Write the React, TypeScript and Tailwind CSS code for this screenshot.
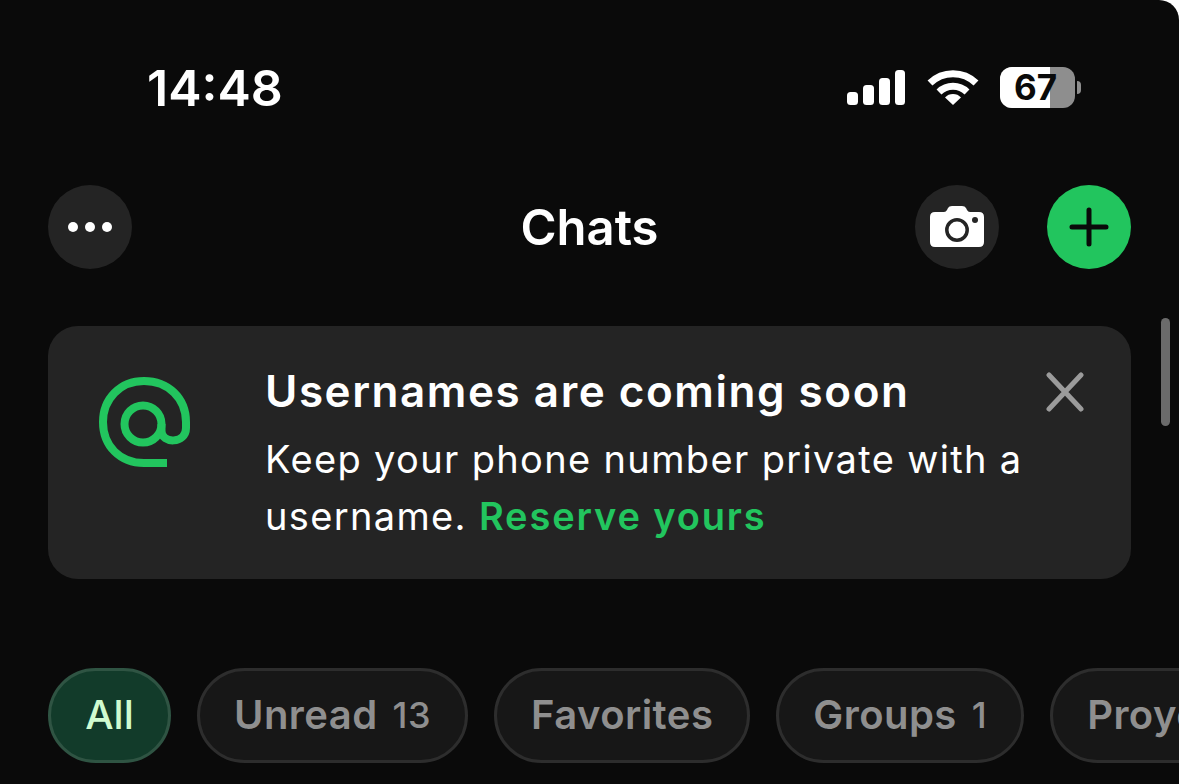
import React from 'react';

const font = { sans: 'font-["Inter",sans-serif]' };

function SignalIcon() {
  return (
    <svg width="60" height="38" viewBox="0 0 60 38" fill="white">
      <rect x="1" y="23" width="11" height="13" rx="3.5" />
      <rect x="17" y="16" width="11" height="20" rx="3.5" />
      <rect x="33" y="9" width="11" height="27" rx="3.5" />
      <rect x="49" y="1" width="10" height="35" rx="3.5" />
    </svg>
  );
}

function WifiIcon() {
  return (
    <svg width="52" height="38" viewBox="0 0 52 38" fill="none" stroke="white" strokeWidth="7">
      <path d="M3 14 A33 33 0 0 1 49 14" />
      <path d="M12 23 A20 20 0 0 1 40 23" />
      <path d="M26 36 L18 28.5 A11 11 0 0 1 34 28.5 Z" fill="white" stroke="none" />
    </svg>
  );
}

function Battery() {
  return (
    <div className="flex items-center gap-[2px]">
      <div className="relative w-[75px] h-[41px] rounded-[12px] overflow-hidden bg-[#8e8e8e] flex">
        <div className="w-[50px] h-full bg-white" />
        <span className="absolute inset-0 flex items-center justify-center pr-[4px] text-[35px] font-bold leading-none text-[#0a0a0a]">
          67
        </span>
      </div>
      <div className="w-[4px] h-[13px] rounded-r-full bg-[#8e8e8e]" />
    </div>
  );
}

function CameraIcon() {
  return (
    <svg width="56" height="44" viewBox="0 0 56 44">
      <path
        d="M6 7 H15 Q17 7 18 5 L19 3 Q20 1 23 1 H33 Q36 1 37 3 L38 5 Q39 7 41 7 H50 Q55 7 55 12 V37 Q55 42 50 42 H6 Q1 42 1 37 V12 Q1 7 6 7 Z"
        fill="white"
      />
      <circle cx="28" cy="25" r="10.2" fill="none" stroke="#242424" strokeWidth="3.5" />
      <circle cx="46" cy="15" r="3" fill="#242424" />
    </svg>
  );
}

function AtIcon() {
  return (
    <svg width="92" height="92" viewBox="0 0 92 92" fill="none" stroke="#22c55e" strokeWidth="8" strokeLinecap="butt">
      <circle cx="45" cy="48" r="18.5" />
      <path d="M63.5 48 V55 C63.5 68 88 68 88 52 V46 C88 22 70 5 46 5 C22 5 5 23 5 46 C5 70 22 87 46 87 H69" />
    </svg>
  );
}

function Pill({ label, count, active }: { label: string; count?: string; active?: boolean }) {
  return (
    <div
      className={
        active
          ? 'shrink-0 h-[95px] w-[123px] pb-[2px] rounded-full bg-[#123b2a] border-[3px] border-[#2f5443] flex items-center justify-center text-[40px] font-medium text-[#d0fbd0]'
          : 'shrink-0 h-[95px] px-[34px] pb-[2px] rounded-full bg-[#171717] border-[3px] border-[#2d2d2d] flex items-center gap-[15px] text-[40px] font-semibold tracking-[0.45px] text-[#8f8f8f]'
      }
    >
      <span>{label}</span>
      {count && <span className="text-[36px] font-medium">{count}</span>}
    </div>
  );
}

export default function App() {
  return (
    <div className={`relative w-[1179px] h-[784px] overflow-hidden bg-[#0a0a0a] rounded-tr-[20px] ${font.sans}`}>
      {/* status bar */}
      <div className="flex items-center justify-between h-[175px] mb-[10px] pl-[147px] pr-[98px]">
        <span className="text-[50px] font-semibold text-white leading-none">14:48</span>
        <div className="flex items-center gap-[21px]">
          <SignalIcon />
          <WifiIcon />
          <Battery />
        </div>
      </div>

      {/* header */}
      <div className="relative flex items-center justify-between px-[48px] h-[84px]">
        <div className="w-[84px] h-[84px] rounded-full bg-[#242424] flex items-center justify-center gap-[7px]">
          <span className="w-[10px] h-[10px] rounded-full bg-white" />
          <span className="w-[10px] h-[10px] rounded-full bg-white" />
          <span className="w-[10px] h-[10px] rounded-full bg-white" />
        </div>
        <h1 className="absolute left-0 right-0 pt-[1px] text-center text-[49px] font-semibold text-white">Chats</h1>
        <div className="flex items-center gap-[48px]">
          <div className="w-[84px] h-[84px] rounded-full bg-[#242424] flex items-center justify-center">
            <CameraIcon />
          </div>
          <div className="w-[84px] h-[84px] rounded-full bg-[#22c55e] flex items-center justify-center">
            <svg width="40" height="40" viewBox="0 0 40 40" stroke="#0a0a0a" strokeWidth="5" strokeLinecap="round">
              <path d="M20 3 V37 M3 20 H37" />
            </svg>
          </div>
        </div>
      </div>

      {/* usernames card */}
      <div className="relative mx-[48px] mt-[57px] h-[253px] rounded-[30px] bg-[#242424] flex pl-[50px] pt-[37px]">
        <div className="w-[168px] shrink-0 pt-[13px]">
          <AtIcon />
        </div>
        <div className="-ml-[1px]">
          <h2 className="text-[44px] leading-[56px] font-semibold tracking-[1.53px] text-white">
            Usernames are coming soon
          </h2>
          <p className="mt-[12px] text-[38px] leading-[57px] tracking-[1.35px] text-white">
            Keep your phone number private with a
            <br />
            username. <span className="font-semibold tracking-[1.85px] text-[#22c55e]">Reserve yours</span>
          </p>
        </div>
        <svg
          className="absolute right-[47px] top-[46px]"
          width="38"
          height="40"
          viewBox="0 0 38 40"
          stroke="#9b9b9b"
          strokeWidth="5"
          strokeLinecap="round"
        >
          <path d="M3 3 L35 37 M35 3 L3 37" />
        </svg>
      </div>

      {/* scrollbar */}
      <div className="absolute left-[1161px] top-[318px] w-[9px] h-[108px] rounded-full bg-[#6b6b6b]" />

      {/* filters */}
      <div className="flex gap-[26px] pl-[48px] mt-[89px]">
        <Pill label="All" active />
        <Pill label="Unread" count="13" />
        <Pill label="Favorites" />
        <Pill label="Groups" count="1" />
        <Pill label="Proyectos" />
      </div>
    </div>
  );
}
